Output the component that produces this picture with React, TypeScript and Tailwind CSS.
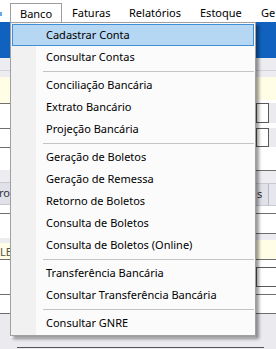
import React from "react";

const font = { fontFamily: '"Noto Sans", "Open Sans", sans-serif' };

type Entry = { t: string; hi?: boolean } | "sep";

const entries: Entry[] = [
  { t: "Cadastrar Conta", hi: true },
  { t: "Consultar Contas" },
  "sep",
  { t: "Conciliação Bancária" },
  { t: "Extrato Bancário" },
  { t: "Projeção Bancária" },
  "sep",
  { t: "Geração de Boletos" },
  { t: "Geração de Remessa" },
  { t: "Retorno de Boletos" },
  { t: "Consulta de Boletos" },
  { t: "Consulta de Boletos (Online)" },
  "sep",
  { t: "Transferência Bancária" },
  { t: "Consultar Transferência Bancária" },
  "sep",
  { t: "Consultar GNRE" },
];

function Line({ c = "bg-[#6f6f6f]" }: { c?: string }) {
  return <div className={`h-[1px] ${c}`} />;
}

export default function App() {
  return (
    <div
      className="relative w-[276px] h-[349px] overflow-hidden bg-[#eaeaef] text-[11px] text-black"
      style={font}
    >
      {/* menu bar */}
      <div className="h-[22px] bg-white flex">
        <div className="w-[10px] pt-[12px]">
          <div className="w-[2px] h-[4px] bg-[#63a8e6]" />
        </div>
        <div className="mt-[3px] h-[19px] w-[52px] border border-b-0 border-[#9d9d9d] pl-[9px] flex items-center leading-none">
          Banco
        </div>
        <div className="w-[57px] pt-[3px] pl-[10px] flex items-center leading-none">Faturas</div>
        <div className="w-[71px] pt-[3px] pl-[10px] flex items-center leading-none">Relatórios</div>
        <div className="w-[61px] pt-[3px] pl-[10px] flex items-center leading-none">Estoque</div>
        <div className="flex-1 pt-[3px] pl-[10px] flex items-center leading-none whitespace-nowrap">
          Ge
        </div>
      </div>
      {/* blue band */}
      <div className="h-[36px] bg-[#1161be]" />
      {/* body columns */}
      <div className="flex h-[280px]">
        {/* left column */}
        <div className="w-[10px] flex flex-col overflow-hidden">
          <div className="h-[12px] bg-[#ececf1]" />
          <Line c="bg-[#d2d2da]" />
          <div className="h-[6px] bg-[#ececf1]" />
          <div className="h-[26px] bg-[#fffde6]" />
          <Line />
          <div className="h-[24px] bg-white" />
          <Line />
          <div className="h-[18px] bg-white" />
          <Line />
          <div className="h-[22px] bg-white" />
          <div className="h-[12px] bg-[#ececf1]" />
          <Line c="bg-[#c9c9d2]" />
          <div className="h-[21px] bg-[#e1e1e9] flex items-center justify-end whitespace-nowrap text-[#333]">
            aro
          </div>
          <Line c="bg-[#c9c9d2]" />
          <div className="h-[8px] bg-white" />
          <Line />
          <div className="h-[24px] bg-white" />
          <div className="h-[5px] bg-[#ececf1]" />
          <div className="h-[16px] bg-[#fffde6] flex items-center whitespace-nowrap text-[#555] leading-none">
            LE
          </div>
          <Line />
          <div className="h-[34px] bg-white" />
          <Line />
          <div className="h-[18px] bg-white" />
          <Line />
          <div className="h-[24px] bg-[#eaeaef]" />
        </div>
        {/* middle (under the menu) */}
        <div className="flex-1 bg-white" />
        {/* right column */}
        <div className="w-[20px] flex flex-col overflow-hidden">
          <div className="h-[12px] bg-[#ececf1]" />
          <Line c="bg-[#d2d2da]" />
          <div className="h-[6px] bg-[#ececf1]" />
          <div className="h-[23px] bg-[#fffde6]" />
          <div className="h-[3px] bg-white" />
          <div className="h-[20px] w-[13px] border border-[#5a5a5a] bg-white" />
          <div className="h-[5px] bg-white" />
          <div className="h-[19px] w-[13px] border border-[#5a5a5a] bg-white" />
          <div className="h-[23px] bg-white" />
          <Line />
          <div className="h-[12px] bg-[#ececf1]" />
          <Line c="bg-[#c9c9d2]" />
          <div className="h-[21px] bg-[#e1e1e9] flex">
            <div className="w-[12px] flex items-center pl-[1px] text-[#333]">s</div>
            <div className="w-[1px] bg-[#b9b9c4]" />
            <div className="flex-1 bg-[#e6e6ee]" />
          </div>
          <Line c="bg-[#c9c9d2]" />
          <div className="h-[7px] bg-white" />
          <Line />
          <div className="h-[19px] bg-white" />
          <Line />
          <div className="h-[6px] bg-[#ececf1]" />
          <div className="h-[19px] bg-[#fffde6]" />
          <Line />
          <div className="h-[7px] bg-white" />
          <div className="h-[20px] border border-r-0 border-[#5a5a5a] bg-white" />
          <div className="h-[7px] bg-white" />
          <Line />
          <div className="h-[18px] bg-white" />
          <Line />
          <div className="h-[24px] bg-[#eaeaef]" />
        </div>
      </div>
      {/* bottom strip */}
      <div className="h-[11px] bg-[#eaeaef] pt-[9px]">
        <div className="ml-[17px] w-[247px] h-[1px] bg-[#555]" />
      </div>

      {/* dropdown menu */}
      <div className="absolute left-[10px] top-[22px] w-[246px] border border-[#a0a0a0] bg-[#fbfbfb] py-[1px] shadow-[3px_3px_3px_rgba(0,0,0,0.4)]">
        <div className="absolute left-0 top-0 bottom-0 w-[25px] bg-[#f1f1f1]" />
        <div className="relative flex flex-col">
          {entries.map((e, i) =>
            e === "sep" ? (
              <div key={i} className="h-[6px] pt-[3px] pl-[32px] pr-[1px]">
                <div className="h-[1px] bg-[#c4c4c4]" />
              </div>
            ) : (
              <div
                key={i}
                className={`mx-[1px] h-[22px] pl-[33px] flex items-center whitespace-nowrap border ${
                  e.hi ? "bg-[#b6d7f3] border-[#3f8ed8]" : "border-transparent"
                }`}
              >
                {e.t}
              </div>
            )
          )}
        </div>
      </div>
    </div>
  );
}
